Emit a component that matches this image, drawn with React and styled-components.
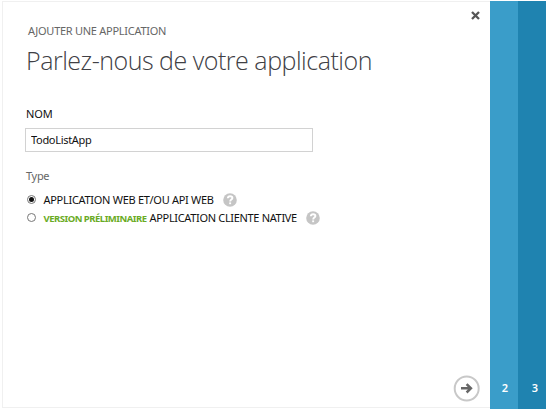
import React from 'react';
import styled, { createGlobalStyle } from 'styled-components';

const GlobalStyle = createGlobalStyle`
  *, *::before, *::after { box-sizing: border-box; }
  body { margin: 0; background: #fff; font-family: "Noto Sans", "Open Sans", sans-serif; }
  button, input { font-family: inherit; }
`;

const Wizard = styled.div`
  display: flex;
  width: 547px;
  height: 410px;
  padding: 1px 1px 1px 2px;
  overflow: hidden;
`;

const Panel = styled.main`
  display: flex;
  flex-direction: column;
  width: 488px;
  height: 407px;
  padding: 0 10px 5px 23px;
  border: 1px solid #f0f0f0;
  border-right: 0;
`;

const TopBar = styled.header`
  display: flex;
  justify-content: space-between;
  height: 38px;
  padding: 20px 0 0 2px;
`;

const Eyebrow = styled.div`
  font-size: 11px;
  line-height: 18px;
  letter-spacing: -0.27px;
  color: #666;
  white-space: nowrap;
`;

const CloseButton = styled.button`
  display: flex;
  width: 9px;
  height: 9px;
  margin-top: -11px;
  padding: 0;
  border: 0;
  background: none;
`;

const Title = styled.h1`
  margin: 2px 0 0;
  font-family: "Open Sans", "Noto Sans", sans-serif;
  font-size: 25px;
  font-weight: 300;
  line-height: 36px;
  letter-spacing: -0.48px;
  color: #404045;
  white-space: nowrap;
`;

const Label = styled.label`
  height: 18px;
  margin-top: ${(p) => p.$top}px;
  font-size: 11px;
  line-height: 18px;
  letter-spacing: ${(p) => p.$tracking}px;
  color: ${(p) => p.$color};
`;

const TextInput = styled.input`
  width: 288px;
  height: 24px;
  margin: 5px 0 0 -1px;
  padding: 0 5px 1px;
  border: 1px solid #d2d2d2;
  border-radius: 0;
  outline: 0;
  font-size: 11px;
  letter-spacing: -0.3px;
  color: #111;
`;

const Options = styled.div`
  display: flex;
  flex-direction: column;
  margin-top: 6px;
`;

const Option = styled.label`
  display: flex;
  align-items: center;
  height: 18px;
  font-size: 11px;
  line-height: 18px;
  letter-spacing: ${(p) => p.$tracking}px;
  color: #111;
  white-space: nowrap;
`;

const Radio = styled.span`
  display: flex;
  align-items: center;
  justify-content: center;
  width: 9px;
  height: 9px;
  margin: 0 7.5px 1px 1px;
  border: 1px solid #777;
  border-radius: 50%;

  &::after {
    content: "";
    width: 5px;
    height: 5px;
    border-radius: 50%;
    background: ${(p) => (p.$checked ? '#111' : 'transparent')};
  }
`;

const Preview = styled.strong`
  margin: 1px 3px 0 0;
  font-size: 9.5px;
  letter-spacing: -0.5px;
  color: #6aab25;
`;

const HelpIcon = styled.svg`
  width: 14px;
  height: 14px;
  margin: 0 0 0 ${(p) => p.$left}px;
`;

const Footer = styled.footer`
  display: flex;
  justify-content: flex-end;
  margin-top: auto;
`;

const NextButton = styled.button`
  display: flex;
  width: 27px;
  height: 27px;
  padding: 0;
  border: 0;
  background: none;
`;

const Step = styled.aside`
  display: flex;
  align-items: flex-end;
  justify-content: center;
  width: 28px;
  height: 408px;
  padding: 0 0 12px ${(p) => p.$indent}px;
  background: ${(p) => p.$color};
  color: #fff;
  font-size: 11px;
  font-weight: 600;
  line-height: 18px;
`;

function Help({ left }) {
  return (
    <HelpIcon viewBox="0 0 14 14" $left={left} aria-label="Aide">
      <circle cx="7" cy="7" r="6.8" fill="#c5c5c5" />
      <path d="M4.8 5.3C4.9 3.9 5.8 3.2 7.1 3.2c1.4 0 2.3.7 2.3 1.8 0 1.6-2.2 1.6-2.2 3.4" fill="none" stroke="#fff" strokeWidth="1.9" />
      <rect x="6.2" y="9.4" width="1.9" height="1.8" fill="#fff" />
    </HelpIcon>
  );
}

export default function App() {
  return (
    <>
      <GlobalStyle />
      <Wizard>
        <Panel>
          <TopBar>
            <Eyebrow>AJOUTER UNE APPLICATION</Eyebrow>
            <CloseButton aria-label="Fermer">
              <svg width="9" height="9" viewBox="0 0 9 9">
                <path d="M1 1l7 7M8 1L1 8" stroke="#555" strokeWidth="2.3" />
              </svg>
            </CloseButton>
          </TopBar>
          <Title>Parlez-nous de votre application</Title>
          <Label $top={27} $tracking={-0.15} $color="#111" htmlFor="app-name">NOM</Label>
          <TextInput id="app-name" defaultValue="TodoListApp" />
          <Label as="div" $top={15} $tracking={-0.3} $color="#666">Type</Label>
          <Options>
            <Option $tracking={-0.29}>
              <Radio $checked />
              APPLICATION WEB ET/OU API WEB
              <Help left={9} />
            </Option>
            <Option $tracking={-0.33}>
              <Radio />
              <Preview>VERSION PRÉLIMINAIRE</Preview>
              APPLICATION CLIENTE NATIVE
              <Help left={9} />
            </Option>
          </Options>
          <Footer>
            <NextButton aria-label="Suivant">
              <svg width="27" height="27" viewBox="0 0 27 27">
                <circle cx="13.7" cy="13.5" r="12" fill="#fff" stroke="#c8c8c8" strokeWidth="2" />
                <path d="M8 13.3h10M13.6 9.1l4.3 4.2-4.3 4.2" fill="none" stroke="#666" strokeWidth="2.5" />
              </svg>
            </NextButton>
          </Footer>
        </Panel>
        <Step $color="#3a9dc9" $indent={2}>2</Step>
        <Step $color="#1f83b0" $indent={6}>3</Step>
      </Wizard>
    </>
  );
}
